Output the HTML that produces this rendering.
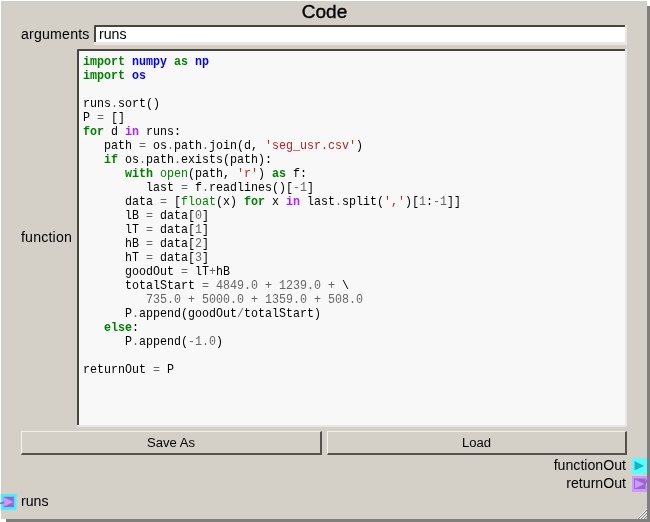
<!DOCTYPE html>
<html><head><meta charset="utf-8">
<style>
html,body{margin:0;padding:0;}
body{width:650px;height:522px;background:#fff;position:relative;overflow:hidden;font-family:"Liberation Sans",sans-serif;color:#000;}
#shadow{position:absolute;left:6px;top:6px;width:646px;height:518px;background:#7f7f7f;}
#panel{position:absolute;left:1px;top:1px;width:646px;height:518px;background:#d4d0c8;}
.abs{position:absolute;}
#title{left:0;width:649px;top:1px;text-align:center;font-size:19px;line-height:22px;-webkit-text-stroke:0.35px #000;}
.lbl{font-size:14.15px;line-height:16px;white-space:nowrap;}
#inp{left:94px;top:25px;width:533px;height:19.5px;background:#eae7e1;border-radius:1px;}
#inp i{position:absolute;left:0;top:0;width:531px;height:17.2px;background:#48453f;border-radius:1px 0 0 0;}
#inp b{position:absolute;left:2px;top:2px;width:529px;height:15.2px;background:#fff;}
#inp span{position:absolute;left:5px;top:1px;font-size:14.15px;line-height:16px;}
#ta{left:77px;top:49px;width:550px;height:377.6px;background:#eae7e1;border-radius:1px;}
#ta i{position:absolute;left:0;top:0;width:548px;height:376px;background:#48453f;border-radius:1px 0 0 0;}
#ta b{position:absolute;left:2px;top:2px;width:546px;height:374px;background:#f8f8f8;}
pre{margin:0;position:absolute;left:6px;top:6px;font-family:"Liberation Mono",monospace;font-size:13.18px;line-height:14px;color:#000;transform:scale(0.8852,1);transform-origin:0 0;}
.k{color:#008000;font-weight:bold;}
.n{color:#0000ff;font-weight:bold;}
.s{color:#ba2121;}
.m{color:#666;}
.o{color:#666;}
.w{color:#aa22ff;font-weight:bold;}
.b{color:#008000;}
.btn{top:431px;height:24px;box-sizing:border-box;border-top:1px solid #f0eee8;border-left:1px solid #f6f5f0;border-right:2px solid #55524e;border-bottom:2px solid #55524e;text-align:center;font-size:13.05px;line-height:22px;}
</style></head><body>
<div id="shadow"></div>
<div id="panel"></div>
<div id="fg" style="position:absolute;left:0;top:0;width:650px;height:522px;will-change:transform;">
<div id="title" class="abs">Code</div>
<div class="abs lbl" style="left:21px;top:26px;letter-spacing:0.2px;">arguments</div>
<div id="inp" class="abs"><i></i><b></b><span>runs</span></div>
<div class="abs lbl" style="left:21px;top:229px;letter-spacing:0.18px;">function</div>
<div id="ta" class="abs"><i></i><b></b><pre><span class="k">import</span> <span class="n">numpy</span> <span class="k">as</span> <span class="n">np</span>
<span class="k">import</span> <span class="n">os</span>

runs<span class="o">.</span>sort()
P <span class="o">=</span> []
<span class="k">for</span> d <span class="w">in</span> runs:
   path <span class="o">=</span> os<span class="o">.</span>path<span class="o">.</span>join(d, <span class="s">'seg_usr.csv'</span>)
   <span class="k">if</span> os<span class="o">.</span>path<span class="o">.</span>exists(path):
      <span class="k">with</span> <span class="b">open</span>(path, <span class="s">'r'</span>) <span class="k">as</span> f:
         last <span class="o">=</span> f<span class="o">.</span>readlines()[<span class="o">-</span><span class="m">1</span>]
      data <span class="o">=</span> [<span class="b">float</span>(x) <span class="k">for</span> x <span class="w">in</span> last<span class="o">.</span>split(<span class="s">','</span>)[<span class="m">1</span>:<span class="o">-</span><span class="m">1</span>]]
      lB <span class="o">=</span> data[<span class="m">0</span>]
      lT <span class="o">=</span> data[<span class="m">1</span>]
      hB <span class="o">=</span> data[<span class="m">2</span>]
      hT <span class="o">=</span> data[<span class="m">3</span>]
      goodOut <span class="o">=</span> lT<span class="o">+</span>hB
      totalStart <span class="o">=</span> <span class="m">4849.0</span> <span class="o">+</span> <span class="m">1239.0</span> <span class="o">+</span> \
         <span class="m">735.0</span> <span class="o">+</span> <span class="m">5000.0</span> <span class="o">+</span> <span class="m">1359.0</span> <span class="o">+</span> <span class="m">508.0</span>
      P<span class="o">.</span>append(goodOut<span class="o">/</span>totalStart)
   <span class="k">else</span>:
      P<span class="o">.</span>append(<span class="o">-</span><span class="m">1.0</span>)

returnOut <span class="o">=</span> P</pre></div>
<div class="abs btn" style="left:21px;width:301px;">Save As</div>
<div class="abs btn" style="left:327px;width:300px;">Load</div>
<div class="abs lbl" style="right:24px;top:457px;">functionOut</div>
<div class="abs lbl" style="right:24px;top:475px;">returnOut</div>
<div class="abs lbl" style="left:21px;top:493px;">runs</div>
<svg class="abs" style="left:0;top:0" width="650" height="522" viewBox="0 0 650 522">
<rect x="632" y="458" width="15" height="16" fill="#55ffff"/>
<polygon points="634.5,461 644,466 634.5,470.5" fill="#1ab2c4"/>
<rect x="632" y="476" width="15" height="16" fill="#cc99ff"/>
<rect x="634" y="478.5" width="11.5" height="10.5" fill="#9966cc"/>
<polygon points="635,479.5 644.5,484 635,488.5" fill="#cc99ff"/>
<line x1="644" y1="484.5" x2="650" y2="476.5" stroke="#9966cc" stroke-width="1.8"/>
<rect x="1" y="494" width="15.5" height="16" fill="#44eeff"/>
<rect x="3.7" y="496.7" width="10.2" height="10.4" fill="#9966cc"/>
<polygon points="4,497.5 13.5,502 4,506.5" fill="#cc99ff"/>
<line x1="0" y1="503.5" x2="4.5" y2="502.3" stroke="#9966cc" stroke-width="1.8"/>
<g stroke="#fff" stroke-width="1"><line x1="637" y1="519" x2="647" y2="509"/><line x1="640" y1="519" x2="647" y2="512"/><line x1="643" y1="519" x2="647" y2="515"/></g>
<g stroke="#808080" stroke-width="1"><line x1="638" y1="519" x2="647" y2="510"/><line x1="641" y1="519" x2="647" y2="513"/><line x1="644" y1="519" x2="647" y2="516"/></g>
</svg>
</div>
</body></html>
